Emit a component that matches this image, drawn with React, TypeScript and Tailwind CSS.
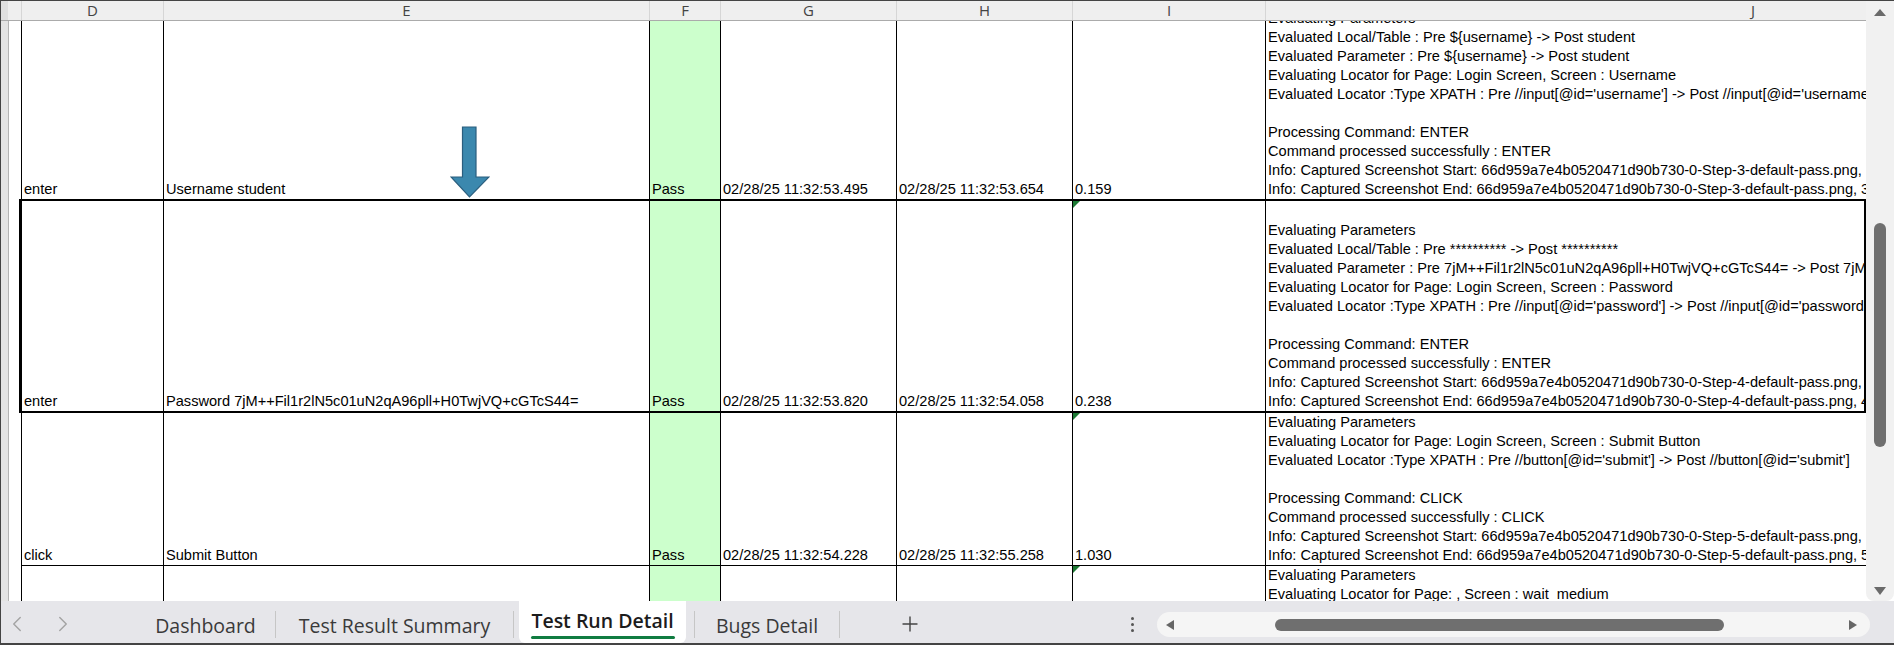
import React from 'react';
import { ChevronLeft, ChevronRight, Plus } from 'lucide-react';

type Row = {
  d: string;
  e: string;
  g: string;
  h: string;
  i: string;
  j: string[];
};

const rowA: Row = {
  d: 'enter',
  e: 'Username student',
  g: '02/28/25 11:32:53.495',
  h: '02/28/25 11:32:53.654',
  i: '0.159',
  j: [
    'Evaluating Parameters',
    'Evaluated Local/Table : Pre ${username} -> Post student',
    'Evaluated Parameter : Pre ${username} -> Post student',
    'Evaluating Locator for Page: Login Screen, Screen : Username',
    "Evaluated Locator :Type XPATH : Pre //input[@id='username'] -> Post //input[@id='username']",
    '',
    'Processing Command: ENTER',
    'Command processed successfully : ENTER',
    'Info: Captured Screenshot Start: 66d959a7e4b0520471d90b730-0-Step-3-default-pass.png, 38 KB',
    'Info: Captured Screenshot End: 66d959a7e4b0520471d90b730-0-Step-3-default-pass.png, 38 KB',
  ],
};

const rowB: Row = {
  d: 'enter',
  e: 'Password 7jM++Fil1r2lN5c01uN2qA96pll+H0TwjVQ+cGTcS44=',
  g: '02/28/25 11:32:53.820',
  h: '02/28/25 11:32:54.058',
  i: '0.238',
  j: [
    '',
    'Evaluating Parameters',
    'Evaluated Local/Table : Pre ********** -> Post **********',
    'Evaluated Parameter : Pre 7jM++Fil1r2lN5c01uN2qA96pll+H0TwjVQ+cGTcS44= -> Post 7jM++Fil1r2lN5c01uN2qA96pll+H0TwjVQ+cGTcS44=',
    'Evaluating Locator for Page: Login Screen, Screen : Password',
    "Evaluated Locator :Type XPATH : Pre //input[@id='password'] -> Post //input[@id='password']",
    '',
    'Processing Command: ENTER',
    'Command processed successfully : ENTER',
    'Info: Captured Screenshot Start: 66d959a7e4b0520471d90b730-0-Step-4-default-pass.png, 41 KB',
    'Info: Captured Screenshot End: 66d959a7e4b0520471d90b730-0-Step-4-default-pass.png, 41 KB',
  ],
};

const rowC: Row = {
  d: 'click',
  e: 'Submit Button',
  g: '02/28/25 11:32:54.228',
  h: '02/28/25 11:32:55.258',
  i: '1.030',
  j: [
    'Evaluating Parameters',
    'Evaluating Locator for Page: Login Screen, Screen : Submit Button',
    "Evaluated Locator :Type XPATH : Pre //button[@id='submit'] -> Post //button[@id='submit']",
    '',
    'Processing Command: CLICK',
    'Command processed successfully : CLICK',
    'Info: Captured Screenshot Start: 66d959a7e4b0520471d90b730-0-Step-5-default-pass.png, 52 KB',
    'Info: Captured Screenshot End: 66d959a7e4b0520471d90b730-0-Step-5-default-pass.png, 52 KB',
  ],
};

const rowD: Row = {
  d: '',
  e: '',
  g: '',
  h: '',
  i: '',
  j: [
    'Evaluating Parameters',
    'Evaluating Locator for Page: , Screen : wait_medium',
    "Evaluated Locator :Type XPATH : Pre //div[@id='wait'] -> Post //div[@id='wait']",
  ],
};

const Cell = ({ className, children }: { className: string; children?: React.ReactNode }) => (
  <div className={`shrink-0 border-l border-black flex flex-col justify-end pl-[2px] overflow-hidden whitespace-nowrap ${className}`}>
    <div className="h-[19px] shrink-0 leading-[19px]">{children}</div>
  </div>
);

// little green error marker in the corner of a cell
const Marker = () => (
  <span className="absolute left-0 top-0 w-0 h-0 border-t-[7px] border-r-[7px] border-t-[#1d7a34] border-r-transparent" />
);

function DataCells({ row, top, mark }: { row: Row; top?: boolean; mark?: boolean }) {
  return (
    <>
      <Cell className="w-[142px]">{row.d}</Cell>
      <Cell className="w-[486px]">{row.e}</Cell>
      <Cell className="w-[71px] bg-[#ccffcc]">{row.d ? 'Pass' : ''}</Cell>
      <Cell className="w-[176px]">{row.g}</Cell>
      <Cell className="w-[176px]">{row.h}</Cell>
      <div className="relative w-[193px] shrink-0 border-l border-black flex flex-col justify-end pl-[2px] overflow-hidden whitespace-nowrap">
        {mark && <Marker />}
        <div className="h-[19px] shrink-0 leading-[19px]">{row.i}</div>
      </div>
      <div
        className={`flex-1 min-w-0 border-l border-black flex flex-col pl-[2px] overflow-hidden ${
          top ? 'justify-start' : 'justify-end'
        }`}
      >
        {row.j.map((line, k) => (
          <div key={k} className="h-[19px] shrink-0 leading-[19px] whitespace-pre">
            {line || '\u00a0'}
          </div>
        ))}
      </div>
    </>
  );
}

const Stub = ({ wide }: { wide?: boolean }) => (
  <div className={`flex shrink-0 ${wide ? 'w-[20px]' : 'w-[18px]'}`}>
    <div className="w-[7px] bg-[#e4e4e4]" />
    <div className="w-px bg-[#b4b4b4]" />
    <div className="flex-1 bg-white" />
  </div>
);

const Sep = ({ className = '' }: { className?: string }) => (
  <div className={`self-start mt-[10px] w-px h-[27px] bg-[#c6c6c6] shrink-0 ${className}`} />
);

export default function App() {
  return (
    <div className="relative w-[1894px] h-[645px] flex flex-col overflow-hidden border-t border-l border-b-2 border-[#444] bg-white font-['Liberation_Sans',Arial,sans-serif] text-[14.6px] text-black">
      <div className="flex h-[600px] shrink-0">
        <div className="w-[1865px] shrink-0 flex flex-col">
          {/* column letters */}
          <div className="flex h-[20px] shrink-0 border-b border-[#ababab] bg-[#efefef] font-['Open_Sans',sans-serif] text-[15px] leading-[19px] text-[#444]">
            <div className="w-[20px] shrink-0 flex">
              <div className="w-[7px] bg-[#e0e0e0]" />
            </div>
            <div className="w-[142px] shrink-0 border-l border-[#d6d6d6] text-center">D</div>
            <div className="w-[486px] shrink-0 border-l border-[#d6d6d6] text-center">E</div>
            <div className="w-[71px] shrink-0 border-l border-[#d6d6d6] text-center">F</div>
            <div className="w-[176px] shrink-0 border-l border-[#d6d6d6] text-center">G</div>
            <div className="w-[176px] shrink-0 border-l border-[#d6d6d6] text-center">H</div>
            <div className="w-[193px] shrink-0 border-l border-[#d6d6d6] text-center">I</div>
            <div className="flex-1 border-l border-[#d6d6d6] pl-[485px]">J</div>
          </div>

          <div className="flex h-[178px] shrink-0">
            <Stub wide />
            <DataCells row={rowA} />
          </div>

          <div className="flex h-[214px] shrink-0">
            <Stub />
            <div className="flex flex-1 min-w-0 border-2 border-black">
              <DataCells row={rowB} mark />
            </div>
          </div>

          <div className="flex h-[153px] shrink-0">
            <Stub wide />
            <div className="flex flex-1 min-w-0 border-b border-black">
              <DataCells row={rowC} mark />
            </div>
          </div>

          <div className="flex flex-1 min-h-0">
            <Stub wide />
            <DataCells row={rowD} top mark />
          </div>
        </div>

        {/* vertical scrollbar */}
        <div className="flex-1 bg-[#f1f1f1] rounded-b-[8px] flex flex-col items-center pt-[8px]">
          <div className="w-0 h-0 border-l-[6px] border-r-[6px] border-b-[7px] border-l-transparent border-r-transparent border-b-[#6a6a6a]" />
          <div className="mt-[207px] w-[12px] h-[224px] rounded-full bg-[#6f6f6f]" />
          <div className="mt-[140px] w-0 h-0 border-l-[6px] border-r-[6px] border-t-[8px] border-l-transparent border-r-transparent border-t-[#6a6a6a]" />
        </div>
      </div>

      {/* sheet tabs */}
      <div className="flex h-[42px] shrink-0 bg-[#e6e6ea] font-['Open_Sans',sans-serif] text-[19.5px] text-[#3a3a3a]">
        <div className="w-[135px] shrink-0 flex items-center pt-[3px] text-[#a3a3a3]">
          <ChevronLeft size={26} strokeWidth={1.3} className="ml-[3px]" />
          <ChevronRight size={26} strokeWidth={1.3} className="ml-[20px]" />
        </div>
        <div className="w-[139px] shrink-0 flex items-center justify-center pt-[7px]">Dashboard</div>
        <Sep />
        <div className="w-[237px] shrink-0 flex items-center justify-center pt-[7px]">Test Result Summary</div>
        <Sep />
        <div className="ml-[5px] w-[167px] shrink-0 bg-white rounded-b-[6px] flex flex-col items-center pt-[7px]">
          <span className="leading-[26px] font-semibold text-[#1c1c1c]">Test Run Detail</span>
          <div className="mt-[2px] h-[3px] w-[144px] rounded-full bg-[#107c41]" />
        </div>
        <Sep className="ml-[8px]" />
        <div className="w-[144px] shrink-0 flex items-center justify-center pt-[7px]">Bugs Detail</div>
        <Sep />
        <div className="ml-[55px] w-[30px] shrink-0 flex items-center justify-center pt-[4px] text-[#444]">
          <Plus size={24} strokeWidth={1.4} />
        </div>
        <div className="ml-[197px] w-[20px] shrink-0 flex flex-col items-center justify-center gap-[3px] pt-[5px]">
          <div className="w-[3px] h-[3px] rounded-full bg-[#555]" />
          <div className="w-[3px] h-[3px] rounded-full bg-[#555]" />
          <div className="w-[3px] h-[3px] rounded-full bg-[#555]" />
        </div>
        <div className="ml-[15px] mt-[11px] w-[713px] h-[25px] shrink-0 rounded-full bg-[#f5f5f5] flex items-center">
          <div className="ml-[9px] w-0 h-0 border-t-[5px] border-b-[5px] border-r-[8px] border-t-transparent border-b-transparent border-r-[#666]" />
          <div className="ml-[101px] w-[449px] h-[12px] rounded-full bg-[#6f6f6f]" />
          <div className="ml-[125px] w-0 h-0 border-t-[5px] border-b-[5px] border-l-[8px] border-t-transparent border-b-transparent border-l-[#666]" />
        </div>
      </div>

      {/* blue arrow shape drawn over the sheet */}
      <svg className="absolute left-[449px] top-[125px]" width="40" height="72" viewBox="0 0 40 72">
        <path
          d="M12.5 1 H26 V51 H39 L19.5 71 L1 51 H12.5 Z"
          fill="#3b88ae"
          stroke="#2b5e7e"
          strokeWidth="1.2"
          strokeLinejoin="miter"
        />
      </svg>
    </div>
  );
}
